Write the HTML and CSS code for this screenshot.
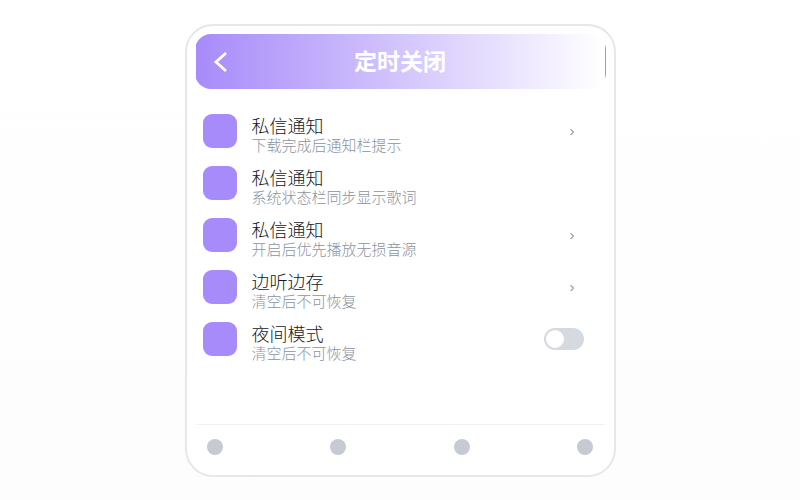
FILE: index.html
```html
<!DOCTYPE html>
<html lang="zh-CN">
<head>
<meta charset="utf-8">
<meta name="viewport" content="width=device-width, initial-scale=1">
<title>定时关闭</title>
<link rel="stylesheet" href="styles.css">
</head>
<body>
<main class="panel">
  <header class="header">
    <button class="back" type="button" aria-label="返回">
      <svg width="14" height="22" viewBox="0 0 14 22" fill="none" stroke="currentColor" stroke-width="2.8"><path d="M13 2 3 11l10 9"/></svg>
    </button>
    <h1 class="title">定时关闭</h1>
  </header>
  <ul class="list">
    <li class="row"><span class="icon"></span><div class="text"><div class="name">私信通知</div><div class="desc">下载完成后通知栏提示</div></div><span class="arrow">›</span></li>
    <li class="row"><span class="icon"></span><div class="text"><div class="name">私信通知</div><div class="desc">系统状态栏同步显示歌词</div></div></li>
    <li class="row"><span class="icon"></span><div class="text"><div class="name">私信通知</div><div class="desc">开启后优先播放无损音源</div></div><span class="arrow">›</span></li>
    <li class="row"><span class="icon"></span><div class="text"><div class="name">边听边存</div><div class="desc">清空后不可恢复</div></div><span class="arrow">›</span></li>
    <li class="row"><span class="icon"></span><div class="text"><label class="name" for="night">夜间模式</label><div class="desc">清空后不可恢复</div></div><input class="switch" id="night" type="checkbox" role="switch"></li>
  </ul>
  <nav class="tabs">
    <button class="tab" type="button" aria-label="1"></button>
    <button class="tab" type="button" aria-label="2"></button>
    <button class="tab" type="button" aria-label="3"></button>
    <button class="tab" type="button" aria-label="4"></button>
  </nav>
</main>
</body>
</html>
```
FILE: styles.css
```css
* {
  box-sizing: border-box;
}

body {
  margin: 0;
  padding: 24px 16px;
  min-height: 100vh;
  background: linear-gradient(#ffffff, #fdfdfd);
  font-family: "Liberation Sans", "Noto Sans CJK SC", sans-serif;
}

.panel {
  max-width: 431px;
  margin: 0 auto;
  padding: 8px 8px 6px;
  border: 2px solid #e5e7eb;
  border-radius: 28px;
  background: #ffffff;
}

.header {
  display: grid;
  grid-template-columns: 32px 1fr 32px;
  align-items: center;
  height: 55px;
  padding: 0 8px;
  border: 1px solid transparent;
  border-radius: 16px;
  background: linear-gradient(90deg, #a78bfa, #ffffff);
  color: #ffffff;
}

.back {
  display: flex;
  justify-content: center;
  padding: 0;
  border: 0;
  background: none;
  color: inherit;
}

.title {
  margin: 0;
  font-size: 23px;
  line-height: 32px;
  font-weight: 700;
  text-align: center;
}

.list {
  display: grid;
  gap: 12px;
  margin: 0;
  padding: 22px 22px 65px 8px;
  list-style: none;
}

.row {
  display: flex;
  align-items: center;
  height: 40px;
}

.icon {
  width: 34px;
  height: 34px;
  margin-right: 15px;
  border-radius: 9px;
  background: #a78bfa;
}

.text {
  flex: 1;
  padding-top: 10px;
}

.name {
  display: block;
  font-size: 18px;
  line-height: 20px;
  font-weight: 300;
  color: #111827;
}

.desc {
  font-size: 15px;
  line-height: 18px;
  font-weight: 300;
  color: #8b93a1;
}

.arrow {
  width: 14px;
  font-size: 15px;
  line-height: 20px;
  color: #8b93a1;
}

.switch {
  appearance: none;
  display: flex;
  width: 40px;
  height: 22px;
  margin: 0;
  padding: 2px;
  border-radius: 11px;
  background: #d5d9e0;
}

.switch::before {
  content: "";
  width: 18px;
  height: 18px;
  border-radius: 50%;
  background: #ffffff;
}

.switch:checked {
  justify-content: flex-end;
  background: #a78bfa;
}

.tabs {
  display: flex;
  justify-content: space-between;
  margin: 0 1px;
  padding: 14px 11px;
  border-top: 1px solid #f1f1f4;
}

.tab {
  width: 16px;
  height: 16px;
  padding: 0;
  border: 0;
  border-radius: 50%;
  background: #c6cbd3;
}
```
